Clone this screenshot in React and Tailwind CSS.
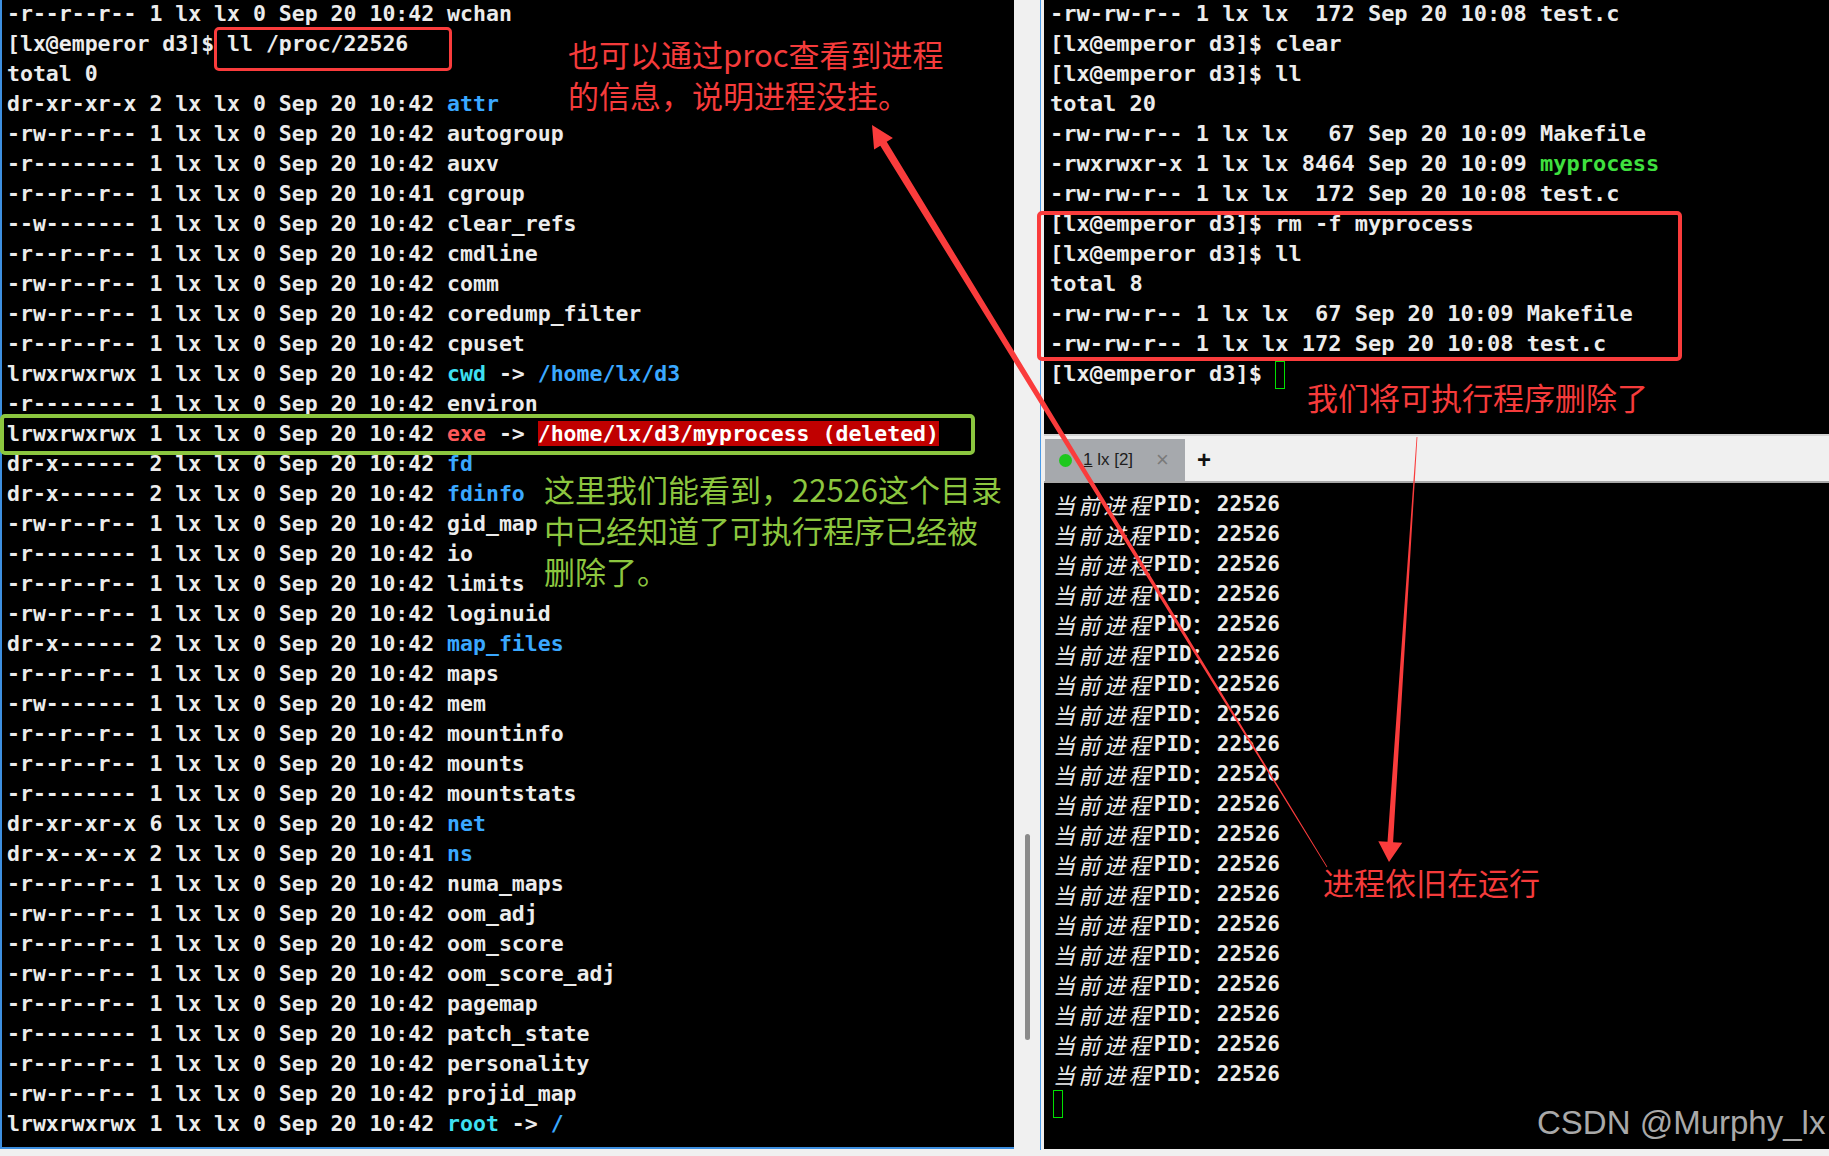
import React from 'react';

const BLUE = 'text-[#3aa8ff]';
const CYAN = 'text-[#3ee0f2]';
const RED = 'text-[#ff5a5a]';

const ls = (perm, n, time, name, cls = '') => [
  [`${perm} ${n} lx lx 0 Sep 20 ${time} `, ''],
  [name, cls],
];

const procLines = [
  ls('-r--r--r--', '1', '10:42', 'wchan'),
  [['[lx@emperor d3]$ ll /proc/22526', '']],
  [['total 0', '']],
  ls('dr-xr-xr-x', '2', '10:42', 'attr', BLUE),
  ls('-rw-r--r--', '1', '10:42', 'autogroup'),
  ls('-r--------', '1', '10:42', 'auxv'),
  ls('-r--r--r--', '1', '10:41', 'cgroup'),
  ls('--w-------', '1', '10:42', 'clear_refs'),
  ls('-r--r--r--', '1', '10:42', 'cmdline'),
  ls('-rw-r--r--', '1', '10:42', 'comm'),
  ls('-rw-r--r--', '1', '10:42', 'coredump_filter'),
  ls('-r--r--r--', '1', '10:42', 'cpuset'),
  [...ls('lrwxrwxrwx', '1', '10:42', 'cwd', CYAN), [' -> ', ''], ['/home/lx/d3', BLUE]],
  ls('-r--------', '1', '10:42', 'environ'),
  [...ls('lrwxrwxrwx', '1', '10:42', 'exe', RED), [' -> ', ''], ['/home/lx/d3/myprocess (deleted)', 'bg-[#c00000] text-white']],
  ls('dr-x------', '2', '10:42', 'fd', BLUE),
  ls('dr-x------', '2', '10:42', 'fdinfo', BLUE),
  ls('-rw-r--r--', '1', '10:42', 'gid_map'),
  ls('-r--------', '1', '10:42', 'io'),
  ls('-r--r--r--', '1', '10:42', 'limits'),
  ls('-rw-r--r--', '1', '10:42', 'loginuid'),
  ls('dr-x------', '2', '10:42', 'map_files', BLUE),
  ls('-r--r--r--', '1', '10:42', 'maps'),
  ls('-rw-------', '1', '10:42', 'mem'),
  ls('-r--r--r--', '1', '10:42', 'mountinfo'),
  ls('-r--r--r--', '1', '10:42', 'mounts'),
  ls('-r--------', '1', '10:42', 'mountstats'),
  ls('dr-xr-xr-x', '6', '10:42', 'net', BLUE),
  ls('dr-x--x--x', '2', '10:41', 'ns', BLUE),
  ls('-r--r--r--', '1', '10:42', 'numa_maps'),
  ls('-rw-r--r--', '1', '10:42', 'oom_adj'),
  ls('-r--r--r--', '1', '10:42', 'oom_score'),
  ls('-rw-r--r--', '1', '10:42', 'oom_score_adj'),
  ls('-r--r--r--', '1', '10:42', 'pagemap'),
  ls('-r--------', '1', '10:42', 'patch_state'),
  ls('-r--r--r--', '1', '10:42', 'personality'),
  ls('-rw-r--r--', '1', '10:42', 'projid_map'),
  [...ls('lrwxrwxrwx', '1', '10:42', 'root', CYAN), [' -> ', ''], ['/', BLUE]],
];

const shellLines = [
  [['-rw-rw-r-- 1 lx lx  172 Sep 20 10:08 test.c', '']],
  [['[lx@emperor d3]$ clear', '']],
  [['[lx@emperor d3]$ ll', '']],
  [['total 20', '']],
  [['-rw-rw-r-- 1 lx lx   67 Sep 20 10:09 Makefile', '']],
  [['-rwxrwxr-x 1 lx lx 8464 Sep 20 10:09 ', ''], ['myprocess', 'text-[#3fe03f]']],
  [['-rw-rw-r-- 1 lx lx  172 Sep 20 10:08 test.c', '']],
  [['[lx@emperor d3]$ rm -f myprocess', '']],
  [['[lx@emperor d3]$ ll', '']],
  [['total 8', '']],
  [['-rw-rw-r-- 1 lx lx  67 Sep 20 10:09 Makefile', '']],
  [['-rw-rw-r-- 1 lx lx 172 Sep 20 10:08 test.c', '']],
];

function Line({ parts }) {
  return (
    <div className="h-[30px] whitespace-pre">
      {parts.map(([text, cls], i) => (
        <span key={i} className={cls}>{text}</span>
      ))}
    </div>
  );
}

function Cursor() {
  return <span className="inline-block w-[10px] h-[28px] border border-[#00e000] align-middle" />;
}

export default function App() {
  return (
    <div className="relative w-[1829px] h-[1156px] overflow-hidden bg-[#f0f0f0] flex items-start">
      {/* left terminal */}
      <div className="w-[1014px] h-[1150px] shrink-0 bg-black border-l-2 border-b-2 border-[#3d8fe0] pl-[5px] -mt-px font-['DejaVu_Sans_Mono',monospace] font-bold text-[21.5px] leading-[30px] text-[#ececec]">
        {procLines.map((parts, i) => (
          <Line key={i} parts={parts} />
        ))}
      </div>

      {/* scrollbar */}
      <div className="w-[26px] h-[1150px] shrink-0 flex flex-col items-center pt-[834px]">
        <div className="w-[5px] h-[206px] rounded-full bg-[#8a8a8a]" />
      </div>
      <div className="w-[4px] h-[1150px] shrink-0 border-l border-[#4a9be8]" />

      {/* right side */}
      <div className="flex-1 h-[1149px] flex flex-col">
        <div className="h-[435px] bg-black pl-[6px] -mt-px font-['DejaVu_Sans_Mono',monospace] font-bold text-[22px] leading-[30px] text-[#ececec]">
          {shellLines.map((parts, i) => (
            <Line key={i} parts={parts} />
          ))}
          <div className="h-[30px] whitespace-pre">
            <span>[lx@emperor d3]$ </span>
            <Cursor />
          </div>
        </div>
        <div className="h-[2px] bg-[#d4d4d4]" />
        <div className="h-[45px] bg-[#f0f0f0] flex items-end">
          <div className="w-[140px] h-[42px] ml-px bg-[#a6a9ad] flex items-center pl-[14px] font-['Liberation_Sans',sans-serif] text-[17px] text-[#1e1e1e]">
            <span className="w-[13px] h-[13px] rounded-full bg-[#1ec81e]" />
            <span className="ml-[11px]"><span className="underline">1</span> lx [2]</span>
            <span className="ml-[23px] text-[22px] text-[#7a7a7a] leading-none">×</span>
          </div>
          <div className="h-[42px] flex items-center pl-[12px] font-['Liberation_Sans',sans-serif] font-bold text-[24px] text-[#111]">+</div>
        </div>
        <div className="h-[2px] bg-[#a8a8a8]" />
        <div className="flex-1 bg-black pl-[9px] pt-[6px] text-[#ececec] leading-[30px]">
          {Array.from({ length: 20 }).map((_, i) => (
            <div key={i} className="h-[30px] whitespace-pre flex items-center">
              <span className="italic font-['Noto_Sans_CJK_SC',sans-serif] text-[22px] tracking-[3.2px]">当前进程</span>
              <span className="font-['DejaVu_Sans_Mono',monospace] font-bold text-[21px]">PID</span>
              <span className="inline-block w-[25px] font-['Noto_Sans_CJK_SC',sans-serif] font-bold text-[21px]">：</span>
              <span className="font-['DejaVu_Sans_Mono',monospace] font-bold text-[21px]">22526</span>
            </div>
          ))}
          <div className="h-[30px] flex items-center">
            <Cursor />
          </div>
        </div>
      </div>

      {/* annotations */}
      <div className="absolute left-[214px] top-[27px] w-[238px] h-[44px] border-[3px] border-[#fa3c3c] rounded-[5px]" />
      <div className="absolute left-0 top-[414px] w-[975px] h-[41px] border-[4px] border-[#8cc63f] rounded-[5px]" />
      <div className="absolute left-[1037px] top-[211px] w-[645px] h-[150px] border-[4px] border-[#fa3c3c] rounded-[5px]" />

      <div className="absolute left-[568px] top-[33px] font-['Noto_Sans_CJK_SC',sans-serif] text-[31px] leading-[41px] text-[#f53b3b]">
        <div>也可以通过proc查看到进程</div>
        <div>的信息，说明进程没挂。</div>
      </div>
      <div className="absolute left-[544px] top-[468px] font-['Noto_Sans_CJK_SC',sans-serif] text-[31px] leading-[41px] text-[#8cc63f]">
        <div>这里我们能看到，22526这个目录</div>
        <div>中已经知道了可执行程序已经被</div>
        <div>删除了。</div>
      </div>
      <div className="absolute left-[1307px] top-[376px] font-['Noto_Sans_CJK_SC',sans-serif] text-[31px] leading-[41px] text-[#f53b3b]">
        我们将可执行程序删除了
      </div>
      <div className="absolute left-[1323px] top-[861px] font-['Noto_Sans_CJK_SC',sans-serif] text-[31px] leading-[41px] text-[#f53b3b]">
        进程依旧在运行
      </div>
      <div className="absolute left-[1537px] top-[1103px] font-['Liberation_Sans',sans-serif] text-[33px] leading-[40px] text-[#a9a9a9]">
        CSDN @Murphy_lx
      </div>

      <svg className="absolute inset-0 pointer-events-none" width="1829" height="1156">
        <polygon
          fill="#fa3c3c"
          points="872,125 892.9,138.1 886.7,141.8 1327.3,866.8 1326.7,867.2 880.3,145.8 874.1,149.6"
        />
        <polygon
          fill="#fa3c3c"
          points="1389,862 1402.3,842.8 1393.1,842.2 1417.4,437 1416.6,437 1387.5,841.8 1378.3,841.2"
        />
      </svg>
    </div>
  );
}
